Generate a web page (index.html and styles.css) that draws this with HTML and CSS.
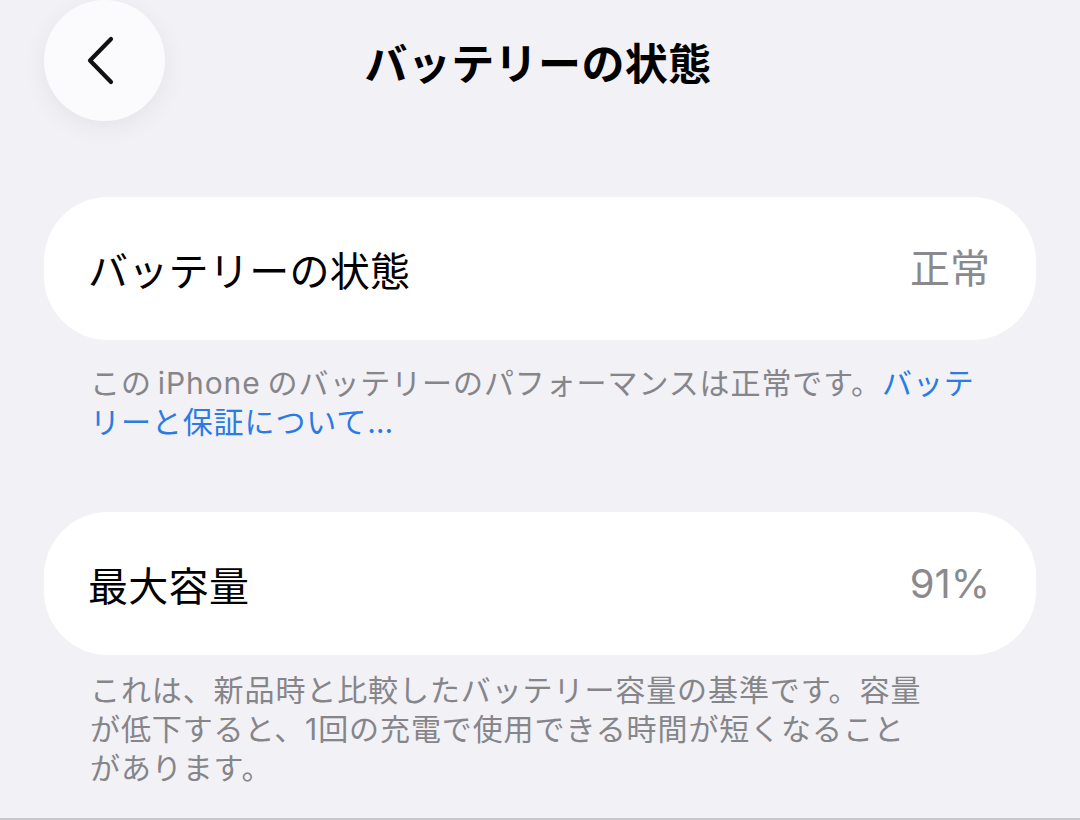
FILE: index.html
```html
<!DOCTYPE html>
<html lang="ja">

<head>
	<meta charset="utf-8">
	<meta name="viewport" content="width=device-width">
	<title>バッテリーの状態</title>
	<link rel="stylesheet" href="styles.css">
</head>

<body>
	<header class="TopBar">
		<button class="BackBtn" aria-label="戻る">
			<svg width="30" height="50" viewBox="0 0 30 50">
				<path d="M25 3 L4 24.5 L25 46" fill="none" stroke="#111" stroke-width="4.2" stroke-linecap="round" stroke-linejoin="round"/>
			</svg>
		</button>
		<h1>バッテリーの状態</h1>
		<span></span>
	</header>

	<section class="Group first">
		<div class="Row">
			<span class="RowLabel">バッテリーの状態</span>
			<span class="RowValue">正常</span>
		</div>
		<p class="Footer">この<span class="Latin">iPhone</span>のバッテリーのパフォーマンスは正常です。<a href="#">バッテ<br>リーと保証について…</a></p>
	</section>

	<section class="Group second">
		<div class="Row">
			<span class="RowLabel">最大容量</span>
			<span class="RowValue">91%</span>
		</div>
		<p class="Footer">これは、新品時と比較したバッテリー容量の基準です。容量<br>が低下すると、1回の充電で使用できる時間が短くなること<br>があります。</p>
	</section>

	<div class="BottomLine"></div>
</body>

</html>
```

FILE: styles.css
```css
html, body {
	margin: 0;
	padding: 0;
	height: 100%;
	background: #f2f1f6;
	font-family: Inter, "Noto Sans CJK JP", sans-serif;
	color: #000;
}

body {
	display: flex;
	flex-flow: column;
	padding: 0 44px;
	box-sizing: border-box;
	position: relative;
	overflow: hidden;
}

.TopBar {
	display: grid;
	grid-template-columns: 1fr auto 1fr;
	align-items: center;
	height: 121px;
}

.TopBar h1 {
	margin: 0;
	font-size: 43px;
	font-weight: bold;
	line-height: 1;
	letter-spacing: 0.4px;
	position: relative;
	top: 1px;
	right: 2px;
	font-family: "Noto Sans CJK JP", sans-serif;
}

.BackBtn {
	width: 121px;
	height: 121px;
	border-radius: 50%;
	border: none;
	padding: 0 8px 0 0;
	background: #fbfbfd;
	box-shadow: 0 6px 26px rgba(0, 0, 0, 0.06);
	display: flex;
	align-items: center;
	justify-content: center;
}

.Group.first {
	margin-top: 76px;
}

.Group.second {
	margin-top: 70px;
}

.Row {
	height: 143px;
	background: #fff;
	border-radius: 64px;
	display: flex;
	align-items: center;
	justify-content: space-between;
	padding: 0 46px 0 44px;
}

.RowLabel {
	font-size: 40px;
	line-height: 1;
	letter-spacing: 0.3px;
	font-family: "Noto Sans CJK JP", sans-serif;
}

.RowValue {
	font-size: 40px;
	line-height: 1;
	color: #8a8a8e;
}

.Footer {
	margin: 0;
	padding: 24px 46px 0;
	font-size: 30px;
	line-height: 39px;
	letter-spacing: 0.9px;
	color: #85858a;
	white-space: nowrap;
}

.second .Footer {
	padding-top: 16px;
}

.Footer .Latin {
	margin: 0 7px 0 6px;
}

.Footer a {
	color: #2a7be4;
	text-decoration: none;
}

.BottomLine {
	position: absolute;
	left: 0;
	right: 0;
	bottom: 0;
	height: 2px;
	background: #c8c8cc;
}
```
